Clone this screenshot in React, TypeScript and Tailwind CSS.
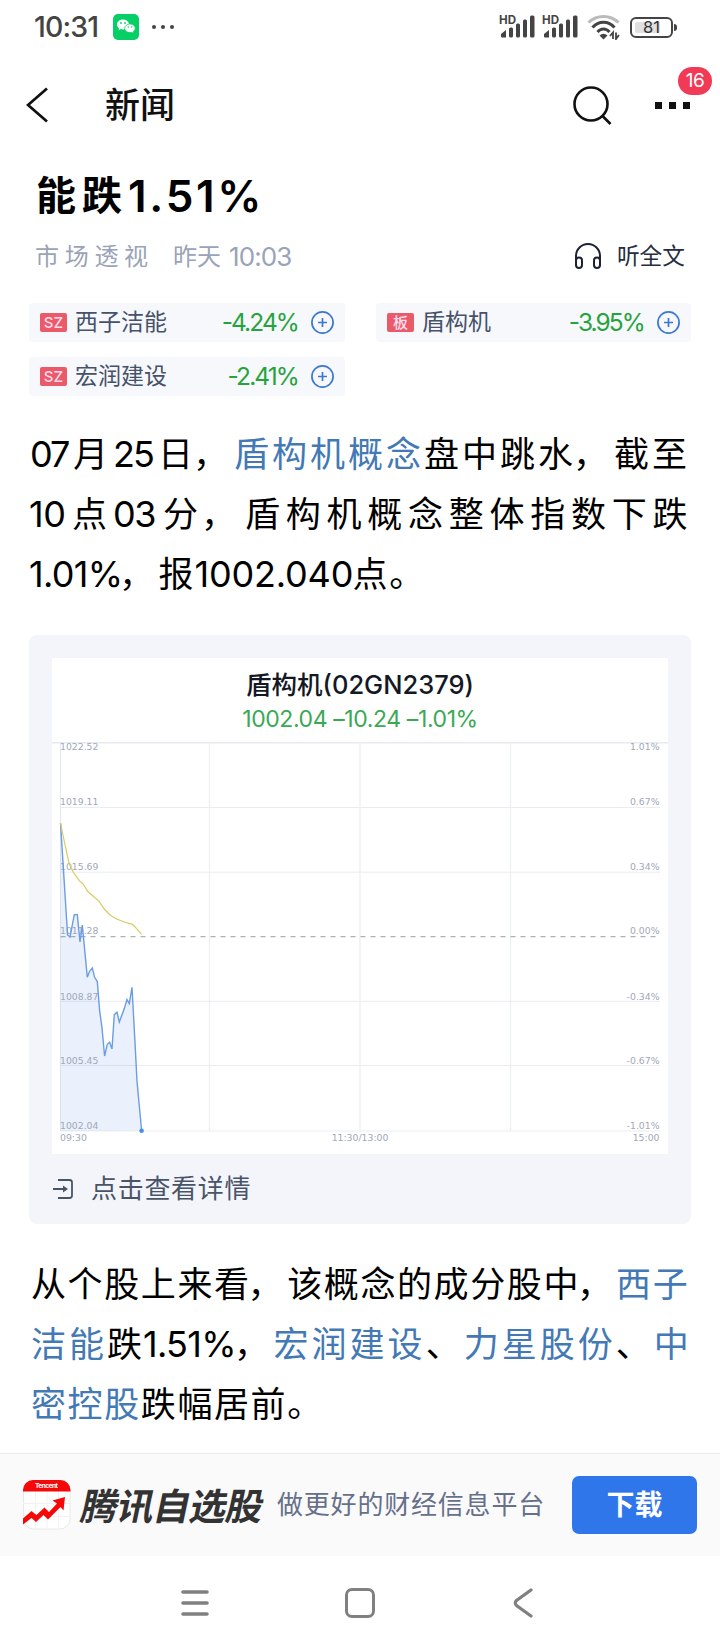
import type { ReactNode } from 'react'

const STOCKS = [
  { tag: 'SZ', name: '西子洁能', change: '-4.24%' },
  { tag: '板', name: '盾构机', change: '-3.95%' },
  { tag: 'SZ', name: '宏润建设', change: '-2.41%' },
]

// chart coordinates are relative to the plot image, 616 x 411
const GRID_Y = [65.5, 130.2, 259.3, 323.5, 389]
const GRID_X = [157.5, 308, 458.5]

const AXIS_LABELS = [
  { y: 8, price: '1022.52', pct: '1.01%' },
  { y: 63, price: '1019.11', pct: '0.67%' },
  { y: 128, price: '1015.69', pct: '0.34%' },
  { y: 192.3, price: '1011.28', pct: '0.00%' },
  { y: 258, price: '1008.87', pct: '-0.34%' },
  { y: 322.3, price: '1005.45', pct: '-0.67%' },
  { y: 387, price: '1002.04', pct: '-1.01%' },
]

const PRICE_LINE =
  '8.5,81 15.6,193 18,195 22.3,172.6 25.3,172.6 28,200 30.3,183 35.3,235.3 37.6,229.3 40.3,226 42.6,235.3 45.3,239.6 47.6,268.3 50,286 52.6,314 55.3,302.3 57.6,300.3 60,307 62.3,272.6 65,270.3 67.3,280 72.3,266.6 75,257.6 77.3,261.6 80,245.3 83,300.6 85,339.3 89.6,388.5'

const AVERAGE_LINE =
  '8.5,81 12.3,99.5 17,121 21.3,130.3 27.3,138.7 31.3,142.3 35.6,149.3 47.3,159.6 52.3,167 58,173 64.6,177 73,180.3 80.6,182.3 84.6,186.6 89.6,192.3'

function Signal() {
  return (
    <svg className="h-[26px] w-[36px]" viewBox="0 0 36 26" fill="#444">
      <text x="0" y="10" fontSize="11.5" fontWeight="700" fontFamily="Inter" textLength="17" lengthAdjust="spacingAndGlyphs">HD</text>
      <path d="M2 20l5-4v7.500H3a1 1 0 01-1-1z" />
      <rect x="10" y="13.500" width="4" height="10" rx="1.500" />
      <rect x="17" y="9.500" width="4" height="14" rx="1.500" />
      <rect x="24" y="5.500" width="4" height="18" rx="1.500" />
      <rect x="31" y="1.500" width="4.500" height="22" rx="1.500" />
    </svg>
  )
}

function Wifi() {
  return (
    <svg className="h-[26px] w-[34px]" viewBox="0 0 34 26" fill="none" strokeWidth="3">
      <path d="M1.500 8.500C10 .5 23 .5 31.500 8.500" stroke="#bbb" />
      <path d="M5.500 13.500C11.500 6.500 21.500 6.500 27.500 13.500" stroke="#444" />
      <path d="M10.500 18C14 14 19 14 22.500 18" stroke="#444" />
      <path d="M12.500 21.500q4-3.500 8 0l-4 4z" fill="#444" />
      <path d="M26 25v-6.500l-3 3.500M29 18.500V25l3-4" stroke="#444" strokeWidth="1.800" />
    </svg>
  )
}

function StatusBar() {
  return (
    <div className="flex h-[54px] items-center pl-[34px] pr-[43px]">
      <span className="w-[79px] text-[28.500px] font-medium leading-none tracking-[-0.900px] text-[#444]">10:31</span>
      <svg className="h-[26px] w-[26px]" viewBox="0 0 26 26">
        <rect width="26" height="26" rx="5" fill="#06cf66" />
        <path d="M10 5.500c-3.400 0-6 2.200-6 5 0 1.600.8 2.900 2.100 3.800l-.5 1.900 2.200-1.100c.7.200 1.400.3 2.200.3 3.300 0 6-2.200 6-4.900s-2.700-5-6-5z" fill="#fff" />
        <path d="M17 10c-3 0-5.300 1.900-5.300 4.300s2.300 4.200 5.300 4.200c.6 0 1.200-.1 1.700-.2l1.900 1-.5-1.700c1.300-.8 2.100-2 2.100-3.300 0-2.400-2.300-4.300-5.200-4.300z" fill="#fff" stroke="#06cf66" strokeWidth=".7" />
        <g fill="#06cf66">
          <circle cx="8" cy="9" r=".9" />
          <circle cx="12" cy="9" r=".9" />
          <circle cx="15.300" cy="13" r=".7" />
          <circle cx="18.700" cy="13" r=".7" />
        </g>
      </svg>
      <div className="ml-[13px] flex gap-[5px]">
        <i className="size-[4px] rounded-full bg-[#444]" />
        <i className="size-[4px] rounded-full bg-[#444]" />
        <i className="size-[4px] rounded-full bg-[#444]" />
      </div>
      <div className="ml-auto flex items-center">
        <Signal />
        <div className="w-[7px]" />
        <Signal />
        <div className="w-[9px]" />
        <Wifi />
        <div className="ml-[9px] flex h-[21px] w-[43px] items-center justify-center rounded-[6px] border-2 border-[#444] p-[3px]">
          <span className="flex h-[11px] w-full items-center justify-center rounded-[2px] bg-linear-to-r from-[#e0e0e0] from-75% to-white to-75% text-[16.500px] leading-none text-[#333]">81</span>
        </div>
        <i className="ml-px h-[7px] w-[3px] rounded-r-full bg-[#444]" />
      </div>
    </div>
  )
}

function Header() {
  return (
    <header className="flex h-[100px] items-center pl-[26px] pr-[29px] pt-[2px]">
      <svg className="h-[36px] w-[22px]" viewBox="0 0 22 36" fill="none" stroke="#111" strokeWidth="2.800">
        <path d="M21 1.500L2 18l19 16.500" />
      </svg>
      <h1 className="ml-[57px] text-[35px] font-medium leading-none text-[#111]">新闻</h1>
      <svg className="ml-auto h-[40px] w-[40px]" viewBox="0 0 40 40" fill="none" stroke="#111" strokeWidth="2.600">
        <circle cx="19" cy="19" r="16.500" />
        <path d="M30.500 31l8 8" />
      </svg>
      <div className="relative ml-[43px] flex w-[36px] gap-[7px]">
        <i className="size-[7px] bg-[#111]" />
        <i className="size-[7px] bg-[#111]" />
        <i className="size-[7px] bg-[#111]" />
        <span className="absolute -top-[35px] left-[23px] flex h-[28px] w-[34px] items-center justify-center rounded-full bg-[#f03a56] text-[19px] leading-none tracking-[-0.500px] text-white">16</span>
      </div>
    </header>
  )
}

function StockChip({ tag, name, change }: { tag: string; name: string; change: string }) {
  return (
    <div className="flex h-[39px] items-center rounded-[4px] bg-[#f6f8fc] pl-[11px] pr-[11px]">
      <span className="flex h-[19px] w-[27px] items-center justify-center rounded-[2px] bg-[#ea5a68] text-[15px] font-medium leading-none text-[#fde]">{tag}</span>
      <span className="ml-[8px] text-[23px] leading-none text-[#47526a]">{name}</span>
      <span className="ml-auto text-[24.500px] leading-none tracking-[-1.900px] text-[#27a33d]">{change}</span>
      <svg className="ml-[13px] h-[23px] w-[23px]" viewBox="0 0 23 23" fill="none" stroke="#3b77d3" strokeWidth="1.700">
        <circle cx="11.500" cy="11.500" r="10.600" />
        <path d="M7 11.500h9M11.500 7v9" />
      </svg>
    </div>
  )
}

function Line({ children }: { children: ReactNode }) {
  return <span className="flex h-[60px] items-center whitespace-nowrap">{children}</span>
}

function Chart() {
  return (
    <svg className="block h-[411px] w-[616px]" viewBox="0 0 616 411" fill="none">
      <path d="M0 .7h616" stroke="#e8eaef" strokeWidth="1.500" />
      {GRID_Y.map((y) => (
        <path key={y} d={`M8.500 ${y}H608`} stroke="#eaecf0" />
      ))}
      {GRID_X.map((x) => (
        <path key={x} d={`M${x} 0V389`} stroke="#eceef2" strokeWidth="1.300" />
      ))}
      <path d="M8.500 0v389" stroke="#e3e7ef" />
      <path d="M8.500 194.600H608" stroke="#a9b0c0" strokeWidth="1.400" strokeDasharray="5 5" />
      <polygon points={`${PRICE_LINE} 8.5,389`} fill="#3f7fe8" fillOpacity=".11" />
      <g fontFamily="DejaVu Sans" fontSize="9.300" fill="#a0a8ba">
        {AXIS_LABELS.map((l) => (
          <g key={l.price}>
            <text x="8" y={l.y}>{l.price}</text>
            <text x="607.500" y={l.y} textAnchor="end">{l.pct}</text>
          </g>
        ))}
        <text x="8" y="399">09:30</text>
        <text x="308" y="399" textAnchor="middle">11:30/13:00</text>
        <text x="607.500" y="399" textAnchor="end">15:00</text>
      </g>
      <polyline points={PRICE_LINE} stroke="#6a9de2" strokeWidth="1.400" />
      <polyline points={AVERAGE_LINE} stroke="#d9cb62" strokeWidth="1.200" />
      <circle cx="89.600" cy="388.700" r="2.300" fill="#4a8fe6" />
    </svg>
  )
}

function QuoteCard() {
  return (
    <div className="ml-[29px] mt-[32px] h-[589px] w-[662px] rounded-[8px] bg-[#f3f5fa] px-[23px] pt-[23px]">
      <div className="h-[496px] bg-white">
        <div className="flex h-[84px] flex-col items-center pt-[13px]">
          <span className="text-[25.500px] font-medium leading-[28px] text-[#141824]">盾构机(02GN2379)</span>
          <span className="mt-[7px] text-[23px] leading-[26px] tracking-[-0.400px] text-[#3aa954]">1002.04 –10.24 –1.01%</span>
        </div>
        <Chart />
      </div>
      <div className="flex h-[70px] items-center">
        <svg className="ml-px h-[22px] w-[22px]" viewBox="0 0 22 22" fill="none" stroke="#4a5468" strokeWidth="1.800">
          <path d="M5 2h11.500a2.500 2.500 0 012.500 2.500v13a2.500 2.500 0 01-2.500 2.500H5M0 11h12" />
          <path d="M10 7.500l5 3.500-5 3.500z" fill="#4a5468" stroke="none" />
        </svg>
        <span className="ml-[16px] text-[26px] leading-none tracking-[0.700px] text-[#4a5468]">点击查看详情</span>
      </div>
    </div>
  )
}

function DownloadBar() {
  return (
    <div className="mt-[19px] flex h-[103px] items-center border-t border-[#e9e9eb] bg-[#fafafb] pl-[23px] pr-[23px]">
      <svg className="h-[50px] w-[48px]" viewBox="0 0 48 50">
        <rect x=".5" y=".5" width="46.500" height="48.500" rx="10" fill="#fff" stroke="#e8e8e8" />
        <path d="M12.500 11v38M24 11v38M35.500 11v38M0 23.500h47M0 36.500h47" stroke="#f2f2f2" />
        <path d="M0 11.500V10A10 10 0 0110 0h27.500a10 10 0 0110 10v1.500z" fill="#f50808" />
        <text x="12" y="8" fontSize="6.500" fontWeight="700" fontFamily="Inter" fill="#fff" textLength="23">Tencent</text>
        <path d="M0 38.500L8.500 31l5 4 8-7.500 4.500 4.500 8-8.500-4.500-3 12.500-3.500-1.500 13.500-3-3.500L25 39.500l-4.500-4.500-7.500 7-4.500-4L0 44.500z" fill="#f50808" />
      </svg>
      <span className="ml-[11px] w-[196px] -skew-x-12 whitespace-nowrap pt-[2px] text-[37px] font-bold leading-none tracking-[-0.700px] text-[#333]">腾讯自选股</span>
      <span className="-ml-px whitespace-nowrap text-[26px] leading-none tracking-[0.800px] text-[#66708a]">做更好的财经信息平台</span>
      <button className="ml-auto h-[58px] w-[125px] rounded-[7px] bg-[#2f76ea] text-[28px] font-bold leading-none text-white">下载</button>
    </div>
  )
}

function NavBar() {
  return (
    <nav className="flex h-[94px] items-center pl-[181px] text-[#808080]">
      <svg className="h-[28px] w-[28px]" viewBox="0 0 28 28" stroke="currentColor" strokeWidth="3.600" strokeLinecap="round">
        <path d="M2 3h24M2 14h24M2 25h24" />
      </svg>
      <i className="ml-[136px] size-[30px] rounded-[7px] border-[3.500px] border-[#808080]" />
      <svg className="ml-[138px] h-[30px] w-[22px]" viewBox="0 0 22 30" fill="none" stroke="currentColor" strokeWidth="3.200" strokeLinecap="round">
        <path d="M18 2L3.500 12.500q-2.500 2.500 0 5L18 28" />
      </svg>
    </nav>
  )
}

export default function App() {
  return (
    <div lang="zh-CN" className="h-[1650px] w-[720px] overflow-hidden bg-white font-[Inter,'Noto_Sans_CJK_SC',sans-serif]">
      <StatusBar />
      <Header />

      <h2 className="flex h-[82px] items-center whitespace-nowrap pl-[36px] pt-[2px] text-[40px] font-bold leading-none text-black">
        <span className="w-[92px] tracking-[6px]">能跌</span>
        <span className="text-[44px] font-semibold tracking-[2.700px]">1.51%</span>
      </h2>

      <div className="flex h-[40px] items-center pl-[35px] pr-[35px] pt-px text-[24px] leading-none text-[#9aa3b8]">
        <span className="w-[138px] tracking-[5.700px]">市场透视</span>
        <span className="w-[56px]">昨天</span>
        <span className="text-[26px] tracking-[-0.900px]">10:03</span>
        <svg className="ml-auto h-[27px] w-[28px]" viewBox="0 0 28 27" fill="none" stroke="#1c2233" strokeWidth="2">
          <path d="M2 21v-8a12 12 0 0124 0v8" />
          <rect x="2" y="14.500" width="6" height="10.500" rx="3" />
          <rect x="20" y="14.500" width="6" height="10.500" rx="3" />
        </svg>
        <span className="ml-[15px] text-[22.700px] text-[#262d3f]">听全文</span>
      </div>

      <div className="ml-[29px] mt-[27px] grid w-[662px] grid-cols-[316px_315px] justify-between gap-y-[15px]">
        {STOCKS.map((s) => (
          <StockChip key={s.name} {...s} />
        ))}
      </div>

      <p className="mt-[28px] pl-[31px] text-[35px] leading-none text-black">
        <Line>
          <span className="-ml-px w-[43px] text-[36px] tracking-[-2px]">07</span>
          <span className="w-[40px]">月</span>
          <span className="w-[45px] text-[36px] tracking-[-2px]">25</span>
          <span className="w-[38px]">日</span>
          <span className="-ml-[3px] w-[41px]">，</span>
          <a className="tracking-[3px] text-[#4379b5]">盾构机概念</a>
          <span className="w-[152px] tracking-[3px]">盘中跳水</span>
          <span className="-ml-[3px] w-[41px]">，</span>
          <span className="tracking-[3px]">截至</span>
        </Line>
        <Line>
          <span className="-ml-[2px] w-[43px] text-[36px] tracking-[-0.500px]">10</span>
          <span className="w-[41px]">点</span>
          <span className="w-[50px] text-[36px] tracking-[-1.500px]">03</span>
          <span className="w-[41px]">分</span>
          <span className="-ml-[3px] w-[44px]">，</span>
          <span className="tracking-[5.750px]">盾构机概念整体指数下跌</span>
        </Line>
        <Line>
          <span className="-ml-[2px] w-[93px] text-[36px] tracking-[-0.700px]">1.01%</span>
          <span className="-ml-[3px] w-[39.600px]">，</span>
          <span className="w-[36px]">报</span>
          <span className="w-[158px] text-[36px] tracking-[-0.200px]">1002.040</span>
          <span className="tracking-[1.600px]">点。</span>
        </Line>
      </p>

      <div className="-mt-px">
        <QuoteCard />
      </div>

      <p className="mt-[30px] pl-[31px] text-[35px] leading-none text-black">
        <Line>
          <span className="w-[219.600px] tracking-[1.600px]">从个股上来看</span>
          <span className="-ml-[3px] w-[39.600px]">，</span>
          <span className="w-[292.800px] tracking-[1.600px]">该概念的成分股中</span>
          <span className="-ml-[3px] w-[39.600px]">，</span>
          <a className="-ml-[0.500px] tracking-[1.600px] text-[#4379b5]">西子</a>
        </Line>
        <Line>
          <a className="tracking-[3px] text-[#4379b5]">洁能</a>
          <span className="w-[36px]">跌</span>
          <span className="w-[94px] text-[36px] tracking-[-0.700px]">1.51%</span>
          <span className="-ml-[3px] w-[39.600px]">，</span>
          <a className="tracking-[3px] text-[#4379b5]">宏润建设</a>
          <span className="tracking-[3px]">、</span>
          <a className="tracking-[3px] text-[#4379b5]">力星股份</a>
          <span className="tracking-[3px]">、</span>
          <a className="text-[#4379b5]">中</a>
        </Line>
        <Line>
          <a className="tracking-[1.600px] text-[#4379b5]">密控股</a>
          <span className="tracking-[1.600px]">跌幅居前。</span>
        </Line>
      </p>

      <DownloadBar />
      <NavBar />
    </div>
  )
}
